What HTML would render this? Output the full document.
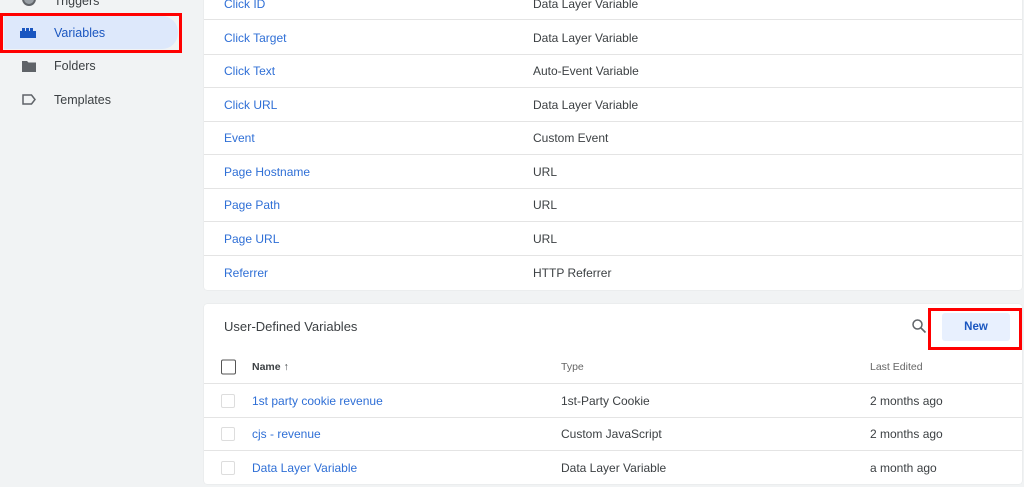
<!DOCTYPE html>
<html><head><style>
*{margin:0;padding:0;box-sizing:border-box}
body{width:1024px;height:487px;overflow:hidden;background:#f1f3f4;font-family:"Liberation Sans",sans-serif;font-size:12px;color:#3c4043;position:relative}
.a{position:absolute}
.link{color:#2f6fd6}
.card{position:absolute;background:#fff;border-radius:3px;box-shadow:0 0 1px rgba(0,0,0,.15)}
.row{position:absolute;left:0;right:0;border-bottom:1px solid #e4e4e4;height:34px}
.row span{position:absolute;top:50%;transform:translateY(-50%);white-space:nowrap}
.cb{position:absolute;left:17px;width:14px;height:14px;border:1.5px solid #ddd;border-radius:2px;top:50%;transform:translateY(-50%)}
</style></head><body>
<div class="a" style="left:22px;top:-8px;width:14px;height:14px;border-radius:50%;border:2px solid #5f6368;background:#9aa0a6"></div>
<div class="a" style="left:54px;top:-6px;color:#3c4043;font-size:12.5px">Triggers</div>
<div class="a" style="left:4px;top:16px;width:174px;height:33px;background:#dde8fb;border-radius:0 16px 16px 0"></div>
<div class="a" style="left:0;top:13px;width:182px;height:40px;border:3px solid #f00"></div>
<svg class="a" style="left:20px;top:28px" width="16" height="10" viewBox="0 0 16 10"><path d="M0 3h2V0h3v3h1V0h3v3h1V0h3v3h3v7H0z" fill="#1a56c0"/></svg>
<div class="a" style="left:54px;top:26px;color:#1a56c0;font-size:12.5px">Variables</div>
<svg class="a" style="left:22px;top:60px" width="14" height="12" viewBox="0 0 14 12"><path d="M0 1h5l1.5 1.5H14V12H0z" fill="#5f6368"/></svg>
<div class="a" style="left:54px;top:59px;font-size:12.5px">Folders</div>
<svg class="a" style="left:22px;top:94px" width="14" height="11" viewBox="0 0 14 11"><path d="M1 1h8.5l3.5 4.5-3.5 4.5H1z" fill="none" stroke="#5f6368" stroke-width="1.5"/></svg>
<div class="a" style="left:54px;top:93px;font-size:12.5px">Templates</div>
<div class="card" style="left:204px;top:-14px;width:818px;height:304px">
<div class="row" style="top:0"><span class="link" style="left:20px;top:18px">Click ID</span><span style="left:329px;top:18px">Data Layer Variable</span></div>
<div class="row" style="top:35px;height:34px"><span class="link" style="left:20px">Click Target</span><span style="left:329px">Data Layer Variable</span></div>
<div class="row" style="top:69px;height:33px"><span class="link" style="left:20px">Click Text</span><span style="left:329px">Auto-Event Variable</span></div>
<div class="row" style="top:102px;height:34px"><span class="link" style="left:20px">Click URL</span><span style="left:329px">Data Layer Variable</span></div>
<div class="row" style="top:136px;height:33px"><span class="link" style="left:20px">Event</span><span style="left:329px">Custom Event</span></div>
<div class="row" style="top:169px;height:34px"><span class="link" style="left:20px">Page Hostname</span><span style="left:329px">URL</span></div>
<div class="row" style="top:203px;height:33px"><span class="link" style="left:20px">Page Path</span><span style="left:329px">URL</span></div>
<div class="row" style="top:236px;height:34px"><span class="link" style="left:20px">Page URL</span><span style="left:329px">URL</span></div>
<div class="row" style="top:270px;height:34px;border:none"><span class="link" style="left:20px">Referrer</span><span style="left:329px">HTTP Referrer</span></div>
</div>
<div class="card" style="left:204px;top:304px;width:818px;height:180px">
<div class="a" style="left:20px;top:15px;font-size:13px;color:#3c4043">User-Defined Variables</div>
<svg class="a" style="left:707px;top:14px" width="16" height="16" viewBox="0 0 16 16"><circle cx="6.5" cy="6.5" r="4.5" fill="none" stroke="#5f6368" stroke-width="1.5"/><path d="M10 10l4.5 4.5" stroke="#5f6368" stroke-width="1.6"/></svg>
<div class="a" style="left:738px;top:9px;width:68px;height:28px;background:#e8f0fe;border-radius:3px;color:#1a56c0;font-weight:bold;font-size:11.5px;text-align:center;line-height:28px">New</div>
<div class="row" style="top:46px;height:34px"><div class="cb" style="border-color:#555;width:15px;height:15px"></div><span style="left:48px;font-size:10.5px;font-weight:bold;color:#3c4043">Name ↑</span><span style="left:357px;font-size:10.5px;color:#666">Type</span><span style="left:666px;font-size:10.5px;color:#666">Last Edited</span></div>
<div class="row" style="top:80px;height:34px"><div class="cb"></div><span class="link" style="left:48px">1st party cookie revenue</span><span style="left:357px">1st-Party Cookie</span><span style="left:666px">2 months ago</span></div>
<div class="row" style="top:114px;height:33px"><div class="cb"></div><span class="link" style="left:48px">cjs - revenue</span><span style="left:357px">Custom JavaScript</span><span style="left:666px">2 months ago</span></div>
<div class="row" style="top:147px;height:33px;border:none"><div class="cb"></div><span class="link" style="left:48px">Data Layer Variable</span><span style="left:357px">Data Layer Variable</span><span style="left:666px">a month ago</span></div>
</div>
<div class="a" style="left:928px;top:308px;width:94px;height:42px;border:3px solid #f00"></div>
</body></html>
